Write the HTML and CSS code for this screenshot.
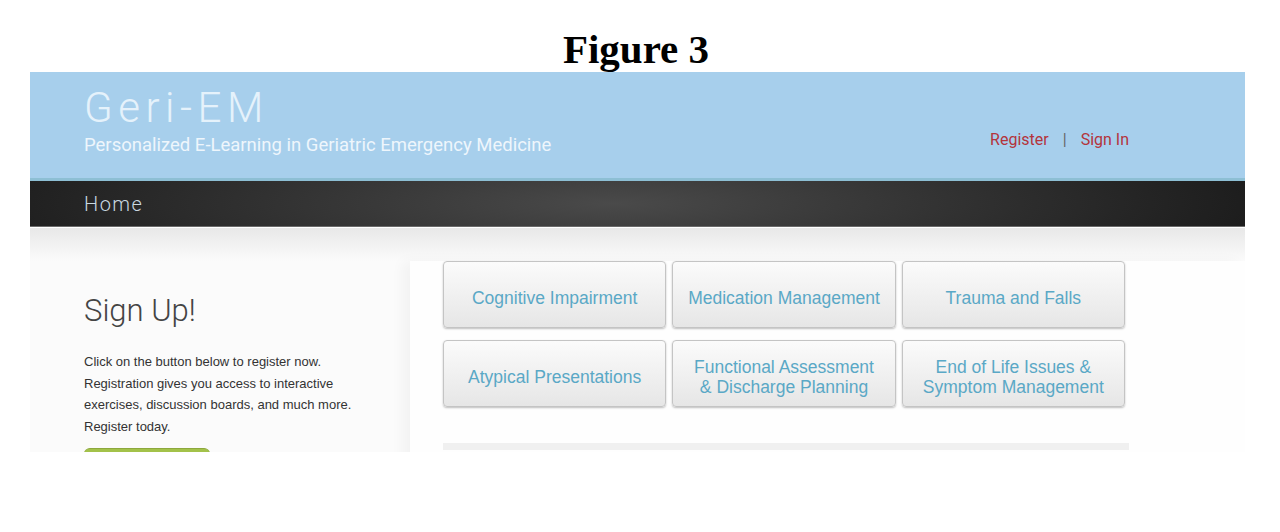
FILE: index.html
```html
<!DOCTYPE html>
<html lang="en">
<head>
    <meta charset="UTF-8">
    <meta name="viewport" content="width=device-width, initial-scale=1.0">
    <title>Figure 3 - Geri-EM</title>
    <link rel="stylesheet" href="styles.css">
</head>
<body>
    <h1 class="figure-title">Figure 3</h1>

    <div class="screen">
        <header class="site-header">
            <div class="brand">
                <div class="brand-name">Geri-EM</div>
                <div class="brand-tagline">Personalized E-Learning in Geriatric Emergency Medicine</div>
            </div>
            <div class="account-links">
                <a href="#">Register</a>
                <span class="divider">|</span>
                <a href="#">Sign In</a>
            </div>
        </header>

        <nav class="main-nav">
            <a href="#">Home</a>
        </nav>

        <div class="content">
            <div class="signup">
                <h2>Sign Up!</h2>
                <p>Click on the button below to register now. Registration gives you access to interactive exercises, discussion boards, and much more. Register today.</p>
                <div class="register-btn"></div>
            </div>

            <div class="modules">
                <div class="module-grid">
                    <a class="module" href="#">Cognitive Impairment</a>
                    <a class="module" href="#">Medication Management</a>
                    <a class="module" href="#">Trauma and Falls</a>
                    <a class="module" href="#">Atypical Presentations</a>
                    <a class="module" href="#">Functional Assessment<br>&amp; Discharge Planning</a>
                    <a class="module" href="#">End of Life Issues &amp;<br>Symptom Management</a>
                </div>
                <div class="module-footer"></div>
            </div>
        </div>
    </div>
</body>
</html>
```

FILE: styles.css
```css
body {
    margin: 0;
    background: #ffffff;
    font-family: 'Liberation Sans', Arial, sans-serif;
}

.figure-title {
    margin: 0;
    height: 72px;
    padding: 26px 8px 0 0;
    box-sizing: border-box;
    text-align: center;
    font-family: 'Liberation Serif', 'Times New Roman', serif;
    font-size: 41px;
    line-height: 46px;
    font-weight: bold;
    color: #000;
}

.screen {
    margin: 0 35px 0 30px;
    height: 380px;
    overflow: hidden;
}

/* blue banner */
.site-header {
    height: 106px;
    background: #a7cfec;
    border-bottom: 3px solid #8dbfd4;
    display: flex;
    justify-content: space-between;
    align-items: flex-start;
    padding: 0 116px 0 54px;
}

.brand-name {
    font-family: Roboto, sans-serif;
    font-weight: 300;
    font-size: 42px;
    letter-spacing: 5.5px;
    color: #e5f2fb;
    line-height: 48px;
    margin-top: 12px;
}

.brand-tagline {
    font-family: Roboto, sans-serif;
    font-size: 18.5px;
    color: #eef6fc;
    margin-top: 2px;
}

.account-links {
    margin-top: 58px;
    font-family: Roboto, sans-serif;
    font-size: 16px;
    display: flex;
    gap: 14px;
}

.account-links a {
    color: #b4343b;
    text-decoration: none;
}

.account-links .divider {
    color: #666;
}

/* dark nav */
.main-nav {
    height: 45px;
    background: radial-gradient(ellipse 75% 320% at 48% 50%, #4a4a4a 0%, #303030 40%, #1a1a1a 75%, #0e0e0e 100%);
    border-bottom: 1px solid #6a6a6a;
    padding-left: 54px;
    display: flex;
    align-items: center;
}

.main-nav a {
    font-family: Roboto, sans-serif;
    font-weight: 300;
    font-size: 20px;
    letter-spacing: 1.5px;
    color: #c9d8e0;
    text-decoration: none;
}

/* page body */
.content {
    border-top: 1px solid #fff;
    background: linear-gradient(#e8e8e8, #f7f7f7 26px, #fbfbfb 34px);
    padding-top: 33px;
    display: flex;
    height: 300px;
}

.signup {
    width: 380px;
    box-sizing: border-box;
    padding: 31px 20px 0 54px;
    background: #fbfbfb;
}

.signup h2 {
    margin: 0 0 22px;
    font-family: Roboto, sans-serif;
    font-weight: 300;
    font-size: 31px;
    color: #444;
}

.signup p {
    margin: 0;
    font-size: 13px;
    line-height: 21.7px;
    color: #333;
}

.register-btn {
    margin-top: 10px;
    width: 126px;
    height: 34px;
    background: #a3c24a;
    border-top: 1px solid #8da83d;
    border-radius: 6px;
}

.modules {
    flex: 1;
    background: #fefefe;
    padding-left: 33px;
    box-shadow: -8px 0 12px rgba(0, 0, 0, 0.035);
}

.module-grid {
    width: 682px;
    display: grid;
    grid-template-columns: repeat(3, 1fr);
    gap: 12px 6px;
}

.module {
    height: 67px;
    box-sizing: border-box;
    padding-top: 6px;
    display: flex;
    align-items: center;
    justify-content: center;
    text-align: center;
    border: 1px solid #c4c4c4;
    border-radius: 4px;
    background: linear-gradient(#fbfbfb, #e6e6e6);
    box-shadow: 0 1px 2px rgba(0, 0, 0, 0.25);
    color: #5aa8c6;
    font-size: 17.5px;
    line-height: 20px;
    text-decoration: none;
}

.module-footer {
    margin-top: 36px;
    width: 686px;
    height: 7px;
    background: #f0f0f0;
}
```
